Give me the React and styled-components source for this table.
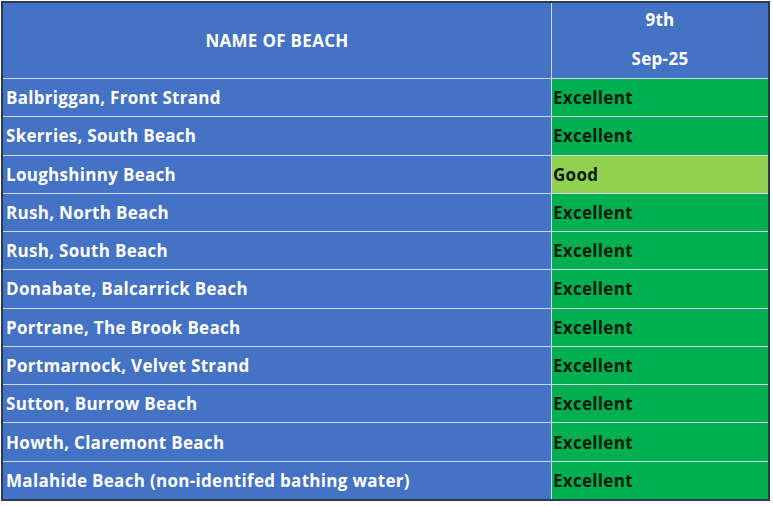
import React from "react";
import styled, { createGlobalStyle } from "styled-components";

const GlobalStyle = createGlobalStyle`
    body {
        margin: 0;
        background: #ffffff;
        font-family: "Open Sans", Lato, sans-serif;
    }
`;

const beaches = [
    { name: "Balbriggan, Front Strand", rating: "Excellent" },
    { name: "Skerries, South Beach", rating: "Excellent" },
    { name: "Loughshinny Beach", rating: "Good" },
    { name: "Rush, North Beach", rating: "Excellent" },
    { name: "Rush, South Beach", rating: "Excellent" },
    { name: "Donabate, Balcarrick Beach", rating: "Excellent" },
    { name: "Portrane, The Brook Beach", rating: "Excellent" },
    { name: "Portmarnock, Velvet Strand", rating: "Excellent" },
    { name: "Sutton, Burrow Beach", rating: "Excellent" },
    { name: "Howth, Claremont Beach", rating: "Excellent" },
    { name: "Malahide Beach (non-identifed bathing water)", rating: "Excellent" },
];

const ratingColours = {
    Excellent: "#00b050",
    Good: "#92d050",
};

class App extends React.Component {
    render() {
        return (
            <>
                <GlobalStyle />
                <Table>
                    <HeaderCell>NAME OF BEACH</HeaderCell>
                    <DateCell>
                        <span>9th</span>
                        <span>Sep-25</span>
                    </DateCell>
                    {beaches.map((beach, index) => (
                        <React.Fragment key={index}>
                            <NameCell>{beach.name}</NameCell>
                            <RatingCell rating={beach.rating}>
                                {beach.rating}
                            </RatingCell>
                        </React.Fragment>
                    ))}
                </Table>
            </>
        );
    }
}

const Table = styled.div`
    box-sizing: border-box;
    margin: 1px 0 0 1px;
    width: 769px;
    height: 500px;
    border: 2px solid #2c3950;
    background: #c6d9f1;
    display: grid;
    grid-template-columns: 548px 1fr;
    grid-template-rows: 75px repeat(11, 1fr);
    gap: 1px;
`;

const Cell = styled.div`
    display: flex;
    align-items: center;
    font-weight: 700;
    font-size: 17px;
    letter-spacing: 0.3px;
`;

const HeaderCell = styled(Cell)`
    background: #4472c4;
    color: #ffffff;
    justify-content: center;
`;

const DateCell = styled(HeaderCell)`
    flex-direction: column;
    justify-content: space-between;
    padding: 5px 0 8px;
    box-sizing: border-box;
`;

const NameCell = styled(Cell)`
    background: #4472c4;
    color: #ffffff;
    padding-left: 3px;
`;

const RatingCell = styled(Cell)`
    background: ${(p) => ratingColours[p.rating]};
    color: #0b1a0b;
    padding-left: 1px;
`;

export default App;
